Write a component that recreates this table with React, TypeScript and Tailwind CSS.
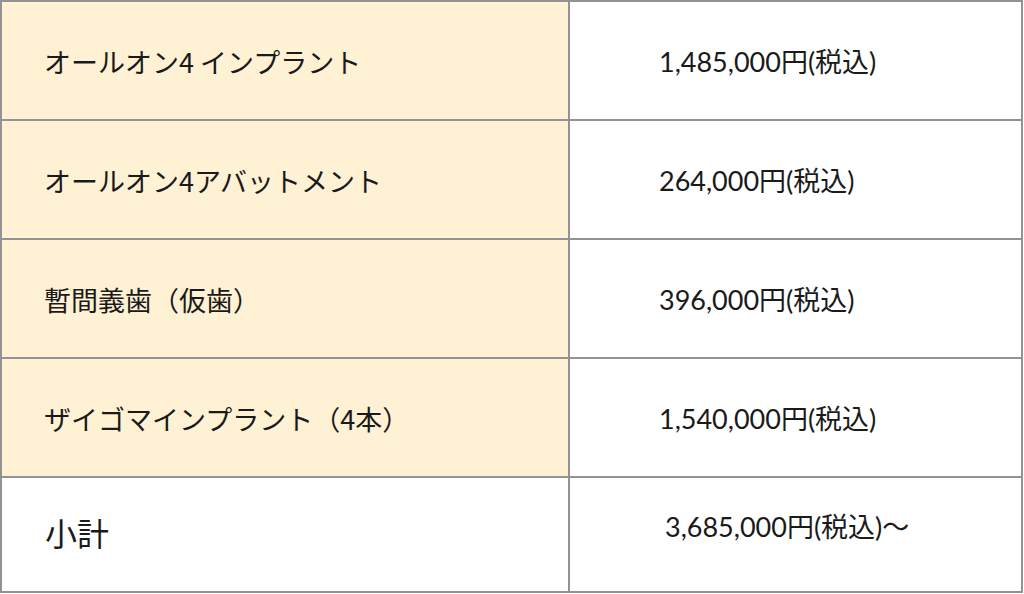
import React from "react";

const rows = [
  { label: "オールオン4 インプラント", price: "1,485,000円(税込)" },
  { label: "オールオン4アバットメント", price: "264,000円(税込)" },
  { label: "暫間義歯（仮歯）", price: "396,000円(税込)" },
  { label: "ザイゴマインプラント（4本）", price: "1,540,000円(税込)" },
];

const jp = { fontFamily: '"Noto Sans CJK JP", sans-serif' };
const num = { fontFamily: 'Lato, "Noto Sans CJK JP", sans-serif' };

export default function App() {
  return (
    <div className="w-[1024px] h-[594px] bg-white">
      <div className="w-[1023px] h-[593px] border-2 border-[#939393] flex flex-col text-[#1a1a1a]">
        {rows.map((r, i) => (
          <div key={i} className="flex h-[119px] shrink-0 border-b-2 border-[#939393]">
            <div
              className="w-[568px] shrink-0 bg-[#fff1d4] border-r-2 border-[#939393] flex items-center pl-[42px] pt-[4px] text-[27px]"
              style={jp}
            >
              {r.label}
            </div>
            <div className="flex-1 flex items-center pl-[89px] pt-[4px] text-[27px]" style={num}>
              {r.price}
            </div>
          </div>
        ))}
        <div className="flex flex-1">
          <div
            className="w-[568px] shrink-0 bg-white border-r-2 border-[#939393] flex items-center pl-[43px] pb-[6px] text-[32px]"
            style={jp}
          >
            小計
          </div>
          <div className="flex-1 flex items-center pl-[95px] pb-[14px] text-[27px]" style={num}>
            3,685,000円(税込)〜
          </div>
        </div>
      </div>
    </div>
  );
}
